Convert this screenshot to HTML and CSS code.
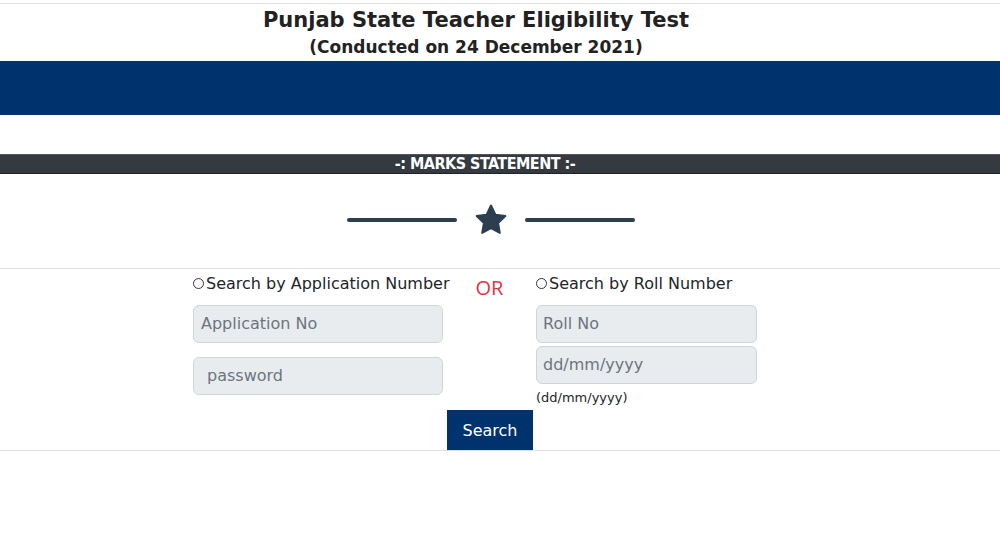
FILE: index.html
```html
<!DOCTYPE html>
<html>
<head>
<meta charset="utf-8">
<link rel="stylesheet" href="styles.css">
</head>
<body>
<header class="head">
  <h1 class="title">Punjab State Teacher Eligibility Test</h1>
  <h2 class="subtitle">(Conducted on 24 December 2021)</h2>
</header>
<div class="band"></div>
<div class="gap"></div>
<div class="marks">-: MARKS STATEMENT :-</div>
<div class="divider">
  <span class="dline"></span>
  <svg class="star" width="34" height="34" viewBox="0 0 24 24"><path d="M12 1.8l3.1 6.4 7 1-5.1 4.9 1.2 7-6.2-3.3-6.2 3.3 1.2-7L1.9 9.2l7-1z" fill="#2c3e50" stroke="#2c3e50" stroke-width="1.4" stroke-linejoin="round"/></svg>
  <span class="dline"></span>
</div>
<section class="form">
  <div class="row">
    <div class="col left">
      <label class="opt"><span class="radio"></span>Search by Application Number</label>
      <div class="input">Application No</div>
      <div class="input pw">password</div>
    </div>
    <div class="or">OR</div>
    <div class="col right">
      <label class="opt"><span class="radio"></span>Search by Roll Number</label>
      <div class="input">Roll No</div>
      <div class="input dob">dd/mm/yyyy</div>
      <div class="hint">(dd/mm/yyyy)</div>
    </div>
  </div>
  <div class="btnrow"><button class="btn">Search</button></div>
</section>
</body>
</html>
```
FILE: styles.css
```css
* { box-sizing: border-box; }
body { margin: 0; background: #fff; font-family: "DejaVu Sans", Verdana, sans-serif; color: #212529; }
.head { border-top: 1px solid #e2e2e2; margin-top: 3px; padding-top: 3px; text-align: center; padding-right: 48px; height: 58px; }
.title { margin: 0; font-size: 21px; font-weight: bold; line-height: 27px; color: #222; }
.subtitle { margin: 0; font-size: 17px; font-weight: bold; line-height: 26px; color: #222; }
.band { height: 54px; background: #00326e; }
.gap { height: 39px; }
.marks { height: 20px; background: #343a40; color: #fff; text-align: center; font-family: "DejaVu Sans Condensed", "Liberation Sans Narrow", sans-serif; font-weight: bold; font-size: 16px; line-height: 18px; padding-right: 30px; letter-spacing: -0.5px; border-top: 1px solid #555; border-bottom: 1px solid #222; }
.divider { height: 95px; display: flex; align-items: center; justify-content: center; gap: 17px; padding-bottom: 3px; padding-right: 18px; border-bottom: 1px solid #dee2e6; }
.dline { width: 110px; height: 4px; background: #2c3e50; border-radius: 2px; }
.star { display: block; }
.form { border-bottom: 1px solid #dee2e6; padding-bottom: 0; }
.row { display: flex; padding-left: 193px; padding-top: 4px; }
.col { display: flex; flex-direction: column; }
.left { width: 250px; }
.right { width: 221px; }
.or { width: 93px; text-align: center; color: #dc3545; font-family: "Open Sans", sans-serif; font-size: 20px; line-height: 28px; padding-top: 1px; }
.opt { display: flex; align-items: center; font-size: 16px; line-height: 22px; color: #212529; height: 22px; white-space: nowrap; }
.radio { flex: none; width: 11px; height: 11px; border: 1px solid #333; border-radius: 50%; margin-right: 2px; margin-top: -2px; }
.input { height: 38px; border: 1px solid #ced4da; background: #e9ecef; border-radius: 6px; font-size: 16px; color: #6c757d; line-height: 36px; padding-left: 7px; margin-top: 10px; }
.left .pw { margin-top: 14px; padding-left: 13px; }
.right .input { padding-left: 6px; }
.right .dob { margin-top: 3px; }
.hint { font-size: 13px; line-height: 16px; margin-top: 6px; color: #212529; }
.btnrow { padding-left: 447px; padding-top: 4px; }
.btn { display: block; width: 86px; height: 40px; border: 0; background: #00326e; color: #fff; font-family: "DejaVu Sans", sans-serif; font-size: 16px; padding: 0; margin: 0; }
```
